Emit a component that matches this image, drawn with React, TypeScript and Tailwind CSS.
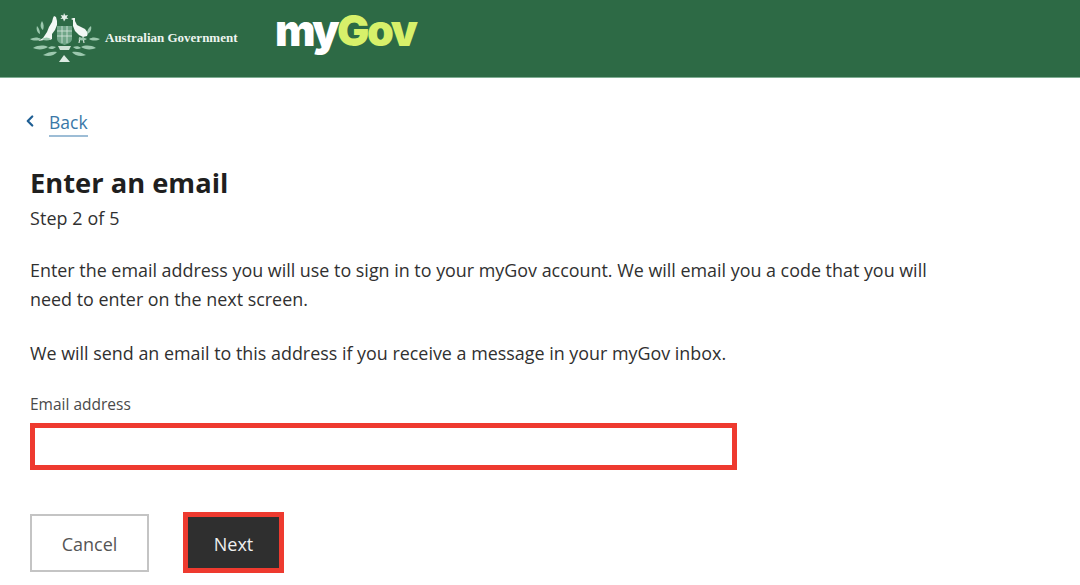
import { ChevronLeft } from "lucide-react";

function Crest() {
  return (
    <svg width="70" height="52" viewBox="0 0 70 52" fill="none" className="shrink-0 blur-[0.4px]">
      {/* star */}
      <path d="M34 1l1.3 2.6 2.7-.7-1.4 2.4 1.8 1.8-2.7-.3L34 9.4l-1-2.6-2.7.3 1.8-1.8-1.4-2.4 2.7.7z" fill="#e4efe8" />
      {/* shield */}
      <path d="M27 14h15v13c0 3-4 5-7.500 6-3.500-1-7.500-3-7.500-6z" fill="#6fa587" />
      <path d="M27 19h15M27 24h15M32 14v17M37 14v17" stroke="#d7e8de" strokeWidth="0.8" />
      {/* kangaroo */}
      <path d="M26 5l-2-1-1 2-1 4-3 5-2 5-4 6-5 3 6-1 3-1 3 1 2-1 0-5 3-4 2-5 0-4z" fill="#f3f8f5" />
      {/* emu */}
      <path d="M43 6l-2 1 2 1 0 6 2 5 4 4 4 2 4-1 1-3-3-4-4-2-4-2-2-4 0-3z" fill="#f3f8f5" />
      <path d="M50 25l-1 6M53 25l1 6" stroke="#f3f8f5" strokeWidth="1" />
      {/* wattle */}
      <g fill="#9cc8ae">
        <path d="M12 9c2 3 2 6 1 9-3-2-3-6-1-9z" />
        <path d="M7 14c2 2 3 5 3 8-3-1-4-5-3-8z" />
        <path d="M61 14c-3 2-4 5-4 8 3-1 5-4 4-8z" />
        <path d="M0 27c4-2 8-2 11 0-3 2-8 2-11 0z" />
        <path d="M70 27c-4-2-8-2-11 0 3 2 8 2 11 0z" />
        <path d="M12 27c3-2 6-2 9 0-3 2-6 2-9 0z" />
        <path d="M57 27c-3-2-6-2-9 0 3 2 6 2 9 0z" />
        <path d="M3 36c5-3 11-3 15-1-4 3-11 3-15 1z" />
        <path d="M66 36c-5-3-11-3-15-1 4 3 11 3 15 1z" />
        <path d="M18 36c2-2 5-2 8-1-2 2-5 3-8 1z" />
        <path d="M51 36c-2-2-5-2-8-1 2 2 5 3 8 1z" />
        <path d="M13 43c5-3 10-4 14-3-3 4-9 5-14 3z" />
        <path d="M56 43c-5-3-10-4-14-3 3 4 9 5 14 3z" />
      </g>
      <path d="M28 34h13l-2 4h-9z" fill="#cfe2d6" />
      <path d="M29 50l5-7 6 7z" fill="#dcebe2" />
    </svg>
  );
}

export default function App() {
  return (
    <div className="w-[1080px] h-[585px] overflow-hidden bg-white font-['Open_Sans',sans-serif] text-[#303030]">
      {/* Header */}
      <header className="h-[78px] bg-[#2d6a45] border-b border-[#7fae93] flex items-center pl-[30px] pb-[2px]">
        <Crest />
        <span className="ml-[5px] font-['Liberation_Serif',serif] font-bold text-[13px] text-[#eef5f0] w-[170px]">
          Australian Government
        </span>
        <span className="font-['Inter',sans-serif] font-black text-[43px] leading-none tracking-[-2.5px] -mt-[14px]">
          <span className="text-white">my</span>
          <span className="text-[#d7f06a]">Gov</span>
        </span>
      </header>

      {/* Back link */}
      <div className="flex items-center pl-[21px] pt-[31px]">
        <ChevronLeft className="w-[18px] h-[18px] text-[#1f5f94] -mt-[5px]" strokeWidth={3} />
        <a className="ml-[10px] text-[17.5px] leading-[26px] text-[#3a78a8] border-b-2 border-[#9dbdd6]">Back</a>
      </div>

      {/* Content */}
      <main className="pl-[30px] pt-[28px]">
        <h1 className="text-[27.300px] leading-[36px] font-bold text-[#1f1f1f]">Enter an email</h1>
        <p className="mt-[5px] text-[17.900px] leading-[24px] tracking-[0.1px]">Step 2 of 5</p>
        <p className="mt-[26px] w-[920px] text-[17.900px] leading-[29px]">
          Enter the email address you will use to sign in to your myGov account. We will email you a code that you will need to enter on the next screen.
        </p>
        <p className="mt-[25px] text-[17.900px] leading-[29px]">
          We will send an email to this address if you receive a message in your myGov inbox.
        </p>
        <label className="block mt-[26px] text-[15.500px] leading-[20px] text-[#4a4a4a]">Email address</label>
        <input className="block mt-[9px] w-[707px] h-[47px] border-[5px] border-[#ee3a2f] bg-white outline-none" />
        <div className="flex items-center gap-[34px] mt-[42px]">
          <button className="w-[119px] h-[58px] pt-[4px] bg-white border-2 border-[#c4c4c4] text-[18px] text-[#555555]">Cancel</button>
          <button className="w-[101px] h-[61px] pt-[4px] bg-[#2f2f2f] border-[5px] border-[#ee3a2f] text-[18px] text-[#f0f0f0]">Next</button>
        </div>
      </main>
    </div>
  );
}
